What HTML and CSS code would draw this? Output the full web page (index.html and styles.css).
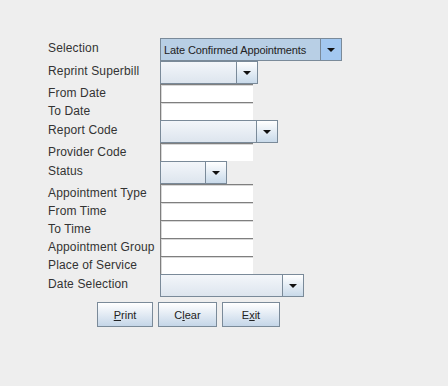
FILE: index.html
```html
<!DOCTYPE html>
<html>
<head>
    <title>Appointment Report</title>
    <link rel="stylesheet" href="styles.css">
</head>
<body>
    <div class="form">
        <label class="lbl combo-lbl">Selection</label>
        <div class="combo selected w-182">
            <span class="combo-text">Late Confirmed Appointments</span>
            <span class="arrow"></span>
        </div>

        <label class="lbl combo-lbl">Reprint Superbill</label>
        <div class="combo w-98"><span class="combo-text"></span><span class="arrow"></span></div>

        <label class="lbl">From Date</label>
        <div class="field"></div>

        <label class="lbl">To Date</label>
        <div class="field"></div>

        <label class="lbl combo-lbl">Report Code</label>
        <div class="combo w-118"><span class="combo-text"></span><span class="arrow"></span></div>

        <label class="lbl">Provider Code</label>
        <div class="field"></div>

        <label class="lbl combo-lbl">Status</label>
        <div class="combo w-67"><span class="combo-text"></span><span class="arrow"></span></div>

        <label class="lbl">Appointment Type</label>
        <div class="field"></div>

        <label class="lbl">From Time</label>
        <div class="field"></div>

        <label class="lbl">To Time</label>
        <div class="field"></div>

        <label class="lbl">Appointment Group</label>
        <div class="field"></div>

        <label class="lbl">Place of Service</label>
        <div class="field"></div>

        <label class="lbl combo-lbl">Date Selection</label>
        <div class="combo w-144"><span class="combo-text"></span><span class="arrow"></span></div>
    </div>

    <div class="buttons">
        <button class="btn w-56"><u>P</u>rint</button>
        <button class="btn w-59">C<u>l</u>ear</button>
        <button class="btn w-58">E<u>x</u>it</button>
    </div>
</body>
</html>
```

FILE: styles.css
```css
body {
    margin: 0;
    background: #eeeeee;
    font-family: "Liberation Sans", Arial, sans-serif;
    font-size: 12px;
    color: #333333;
}
.form {
    display: grid;
    grid-template-columns: 112px auto;
    padding: 38px 0 0 48px;
    justify-items: start;
}
.lbl {
    display: flex;
    align-items: center;
    height: 18px;
    letter-spacing: 0.15px;
}
.combo-lbl {
    height: 23px;
    padding-bottom: 4px;
    box-sizing: border-box;
}
.field {
    width: 93px;
    height: 18px;
    box-sizing: border-box;
    background: #ffffff;
    border-top: 1px solid #7f7f7f;
    border-left: 1px solid #7f7f7f;
    box-shadow: inset 1px 1px 0 #d8d8d8;
}
.combo {
    display: flex;
    height: 23px;
    box-sizing: border-box;
    border: 1px solid #7a8a99;
    background: linear-gradient(#f3f6fa, #dde5ee);
}
.combo-text {
    flex: 1;
    display: flex;
    align-items: center;
    padding-left: 3px;
    font-size: 11px;
    letter-spacing: -0.1px;
    color: #222222;
    border-right: 1px solid #7a8a99;
}
.arrow {
    width: 20px;
    position: relative;
    background: linear-gradient(#ffffff, #c9daea);
}
.arrow::after {
    content: "";
    position: absolute;
    left: 6px;
    top: 9px;
    border-left: 4px solid transparent;
    border-right: 4px solid transparent;
    border-top: 4px solid #111111;
}
.selected {
    background: #b8cfe5;
}
.selected .arrow {
    background: #a3c8f0;
}
.w-182 { width: 182px; }
.w-98 { width: 98px; }
.w-118 { width: 118px; }
.w-67 { width: 67px; }
.w-144 { width: 144px; }
.buttons {
    display: flex;
    gap: 5px;
    padding: 5px 0 0 97px;
}
.btn {
    height: 25px;
    box-sizing: border-box;
    border: 1px solid #7a8a99;
    background: linear-gradient(#ffffff, #c5d6e8);
    font-family: "Liberation Sans", Arial, sans-serif;
    font-size: 11px;
    color: #222222;
    padding: 0;
}
.w-56 { width: 56px; }
.w-59 { width: 59px; }
.w-58 { width: 58px; }
```
